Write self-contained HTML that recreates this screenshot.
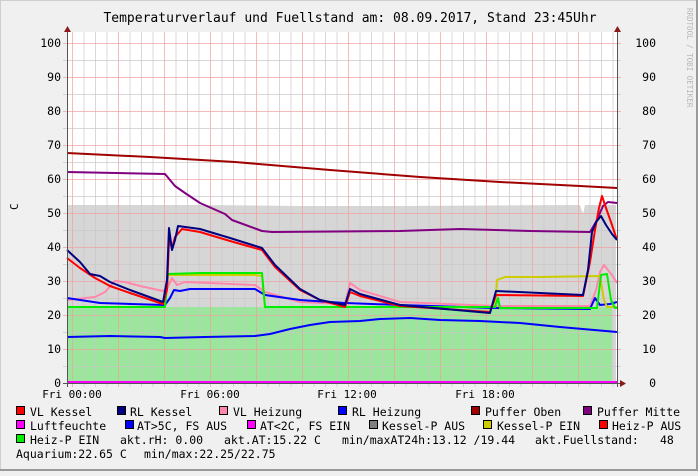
<!DOCTYPE html>
<html><head><meta charset="utf-8"><style>
html,body{margin:0;padding:0;background:#f0f0f0}
svg text{font-family:"DejaVu Sans Mono","Liberation Mono",monospace;white-space:pre}
</style></head><body>
<svg width="698" height="471" viewBox="0 0 698 471" xmlns="http://www.w3.org/2000/svg">
<rect x="0" y="0" width="698" height="471" fill="#f0f0f0"/>
<rect x="0.5" y="0.5" width="697" height="470" fill="none" stroke="#cfcfcf"/>
<line x1="697" y1="0" x2="697" y2="471" stroke="#9a9a9a" stroke-width="2"/>
<line x1="0" y1="470" x2="698" y2="470" stroke="#9a9a9a" stroke-width="2"/>
<text x="350" y="22" font-size="13" text-anchor="middle" fill="#000">Temperaturverlauf und Fuellstand am: 08.09.2017, Stand 23:45Uhr</text>
<text transform="translate(687,8) rotate(90)" font-size="7.5" fill="#b8b8b8">RRDTOOL / TOBI OETIKER</text>
<text transform="translate(18,210) rotate(-90)" font-size="11" fill="#000">C</text>
<rect x="67" y="32" width="550" height="351" fill="#fff"/>
<polygon points="67,205 200,205 300,206 400,206 580,205 583,214 585,205 610,205 616,205 616,383 67,383" fill="#d6d6d6"/>
<polygon points="67,307 612,307 612,383 67,383" fill="#9ce59c"/>
<g id="grid"></g>
<script>
(function(){
var ns="http://www.w3.org/2000/svg",g=document.getElementById("grid");
function L(x1,y1,x2,y2,c){var l=document.createElementNS(ns,"line");l.setAttribute("x1",x1);l.setAttribute("y1",y1);l.setAttribute("x2",x2);l.setAttribute("y2",y2);l.setAttribute("stroke",c);l.setAttribute("stroke-width","1");l.setAttribute("opacity","0.7");g.appendChild(l);}
for(var i=0;i<48;i++){var x=72.5+11.5*i;if(x>617)break;L(x,32,x,387,(i%4==0)?"#f0a0a0":"#c8c8c8");}
for(var v=0;v<=100;v+=5){var y=383-3.4*v+0.5;L(63,y,621,y,(v%10==0)?"#f0a0a0":"#c8c8c8");}
})();
</script>
<g fill="none" stroke-width="2" stroke-linejoin="round">
<polyline stroke="#a00000" points="67,153 150,157 235,162 330,170 420,177 500,182 580,186 617,188"/>
<polyline stroke="#800080" points="67,172 165,174 170,180 175,186 185,193 200,203 225,214 232,220 262,231 272,232 400,231 460,229 530,231 590,232 596,222 603,206 608,202 617,203"/>
<polyline stroke="#0000ff" points="67,337 110,336 160,337 165,338 205,337 255,336 270,334 290,329 310,325 330,322 360,321 380,319 410,318 440,320 480,321 520,323 560,327 617,332"/>
<polyline stroke="#ff88aa" points="67,300 95,297 105,292 115,281 125,282 140,286 163,291 168,287 172,278 177,285 185,282 255,285 265,292 300,302 345,304 350,283 360,290 400,302 495,306 590,306 596,290 600,272 604,265 612,275 617,283"/>
<polyline stroke="#0000ff" points="67,298 100,303 165,305 170,298 174,290 180,291 190,289 255,289 265,295 300,300 345,303 400,305 495,308 590,309 595,298 600,305 610,304 617,302"/>
<polyline stroke="#cccc00" points="67,307 165,307 168,275 255,275 262,276 265,307 495,307 497,280 505,277 540,277 600,276 604,300 607,307 617,307"/>
<polyline stroke="#00ee00" points="67,307 165,307 168,274 200,273 262,273 265,307 495,307 498,298 500,308 597,308 601,275 607,274 611,300 615,308 617,308"/>
<polyline stroke="#ff0000" points="67,258 80,268 95,278 110,286 130,293 163,304 167,290 169,240 172,248 175,237 182,229 200,232 230,241 262,250 275,267 300,290 320,300 345,307 350,292 360,296 400,306 490,312 496,295 583,296 590,262 595,230 599,208 602,196 606,208 612,225 617,240"/>
<polyline stroke="#000080" points="67,250 80,262 90,274 100,276 110,282 130,290 163,302 167,280 169,228 172,250 175,240 178,226 200,229 230,238 262,248 275,265 300,289 320,300 345,305 350,289 360,294 400,305 490,313 496,291 583,295 588,270 592,232 596,222 601,216 606,225 612,234 617,240"/>
<line x1="67" y1="382" x2="617" y2="382" stroke="#ff00ff" stroke-width="2"/>
</g>
<line x1="67.5" y1="28" x2="67.5" y2="387" stroke="#555"/>
<line x1="617.5" y1="28" x2="617.5" y2="387" stroke="#555"/>
<line x1="63" y1="383.5" x2="621" y2="383.5" stroke="#555"/>
<polygon points="64,32 71,32 67.5,26" fill="#8b1a1a"/>
<polygon points="614,32 621,32 617.5,26" fill="#8b1a1a"/>
<polygon points="620,380 620,387 626,383.5" fill="#8b1a1a"/>
<g font-size="11.5" fill="#000">
<g text-anchor="end">
<text x="61" y="47">100</text><text x="61" y="81">90</text><text x="61" y="115">80</text><text x="61" y="149">70</text><text x="61" y="183">60</text><text x="61" y="217">50</text><text x="61" y="251">40</text><text x="61" y="285">30</text><text x="61" y="319">20</text><text x="61" y="353">10</text><text x="61" y="387">0</text>
<text x="656" y="47">100</text><text x="656" y="81">90</text><text x="656" y="115">80</text><text x="656" y="149">70</text><text x="656" y="183">60</text><text x="656" y="217">50</text><text x="656" y="251">40</text><text x="656" y="285">30</text><text x="656" y="319">20</text><text x="656" y="353">10</text><text x="656" y="387">0</text>
</g>
<g text-anchor="middle" font-size="11">
<text x="72" y="398">Fri 00:00</text><text x="210" y="398">Fri 06:00</text><text x="347" y="398">Fri 12:00</text><text x="485" y="398">Fri 18:00</text>
</g>
</g>
<g stroke="#000" stroke-width="1">
<rect x="16.5" y="406.5" width="8" height="8" fill="#ff0000"/>
<rect x="117.5" y="406.5" width="8" height="8" fill="#000080"/>
<rect x="219.5" y="406.5" width="8" height="8" fill="#ff88aa"/>
<rect x="338.5" y="406.5" width="8" height="8" fill="#0000ff"/>
<rect x="471.5" y="406.5" width="8" height="8" fill="#a00000"/>
<rect x="583.5" y="406.5" width="8" height="8" fill="#800080"/>
<rect x="16.5" y="420.5" width="8" height="8" fill="#ff00ff"/>
<rect x="125.5" y="420.5" width="8" height="8" fill="#0000ff"/>
<rect x="247.5" y="420.5" width="8" height="8" fill="#ff00ff"/>
<rect x="369.5" y="420.5" width="8" height="8" fill="#808080"/>
<rect x="483.5" y="420.5" width="8" height="8" fill="#cccc00"/>
<rect x="599.5" y="420.5" width="8" height="8" fill="#ff0000"/>
<rect x="16.5" y="434.5" width="8" height="8" fill="#00ee00"/>
</g>
<g font-size="11.5" fill="#000">
<text x="30" y="416">VL Kessel</text>
<text x="130" y="416">RL Kessel</text>
<text x="233" y="416">VL Heizung</text>
<text x="352" y="416">RL Heizung</text>
<text x="485" y="416">Puffer Oben</text>
<text x="597" y="416">Puffer Mitte</text>
<text x="30" y="430">Luftfeuchte</text>
<text x="137" y="430">AT&gt;5C, FS AUS</text>
<text x="260" y="430">AT&lt;2C, FS EIN</text>
<text x="382" y="430">Kessel-P AUS</text>
<text x="497" y="430">Kessel-P EIN</text>
<text x="612" y="430">Heiz-P AUS</text>
<text x="30" y="444">Heiz-P EIN</text>
<text x="120" y="444">akt.rH: 0.00</text>
<text x="224" y="444">akt.AT:15.22 C</text>
<text x="342" y="444">min/maxAT24h:13.12 /19.44</text>
<text x="535" y="444">akt.Fuellstand:</text>
<text x="660" y="444">48</text>
<text x="16" y="458">Aquarium:22.65 C</text>
<text x="144" y="458">min/max:22.25/22.75</text>
</g>
</svg>
</body></html>
